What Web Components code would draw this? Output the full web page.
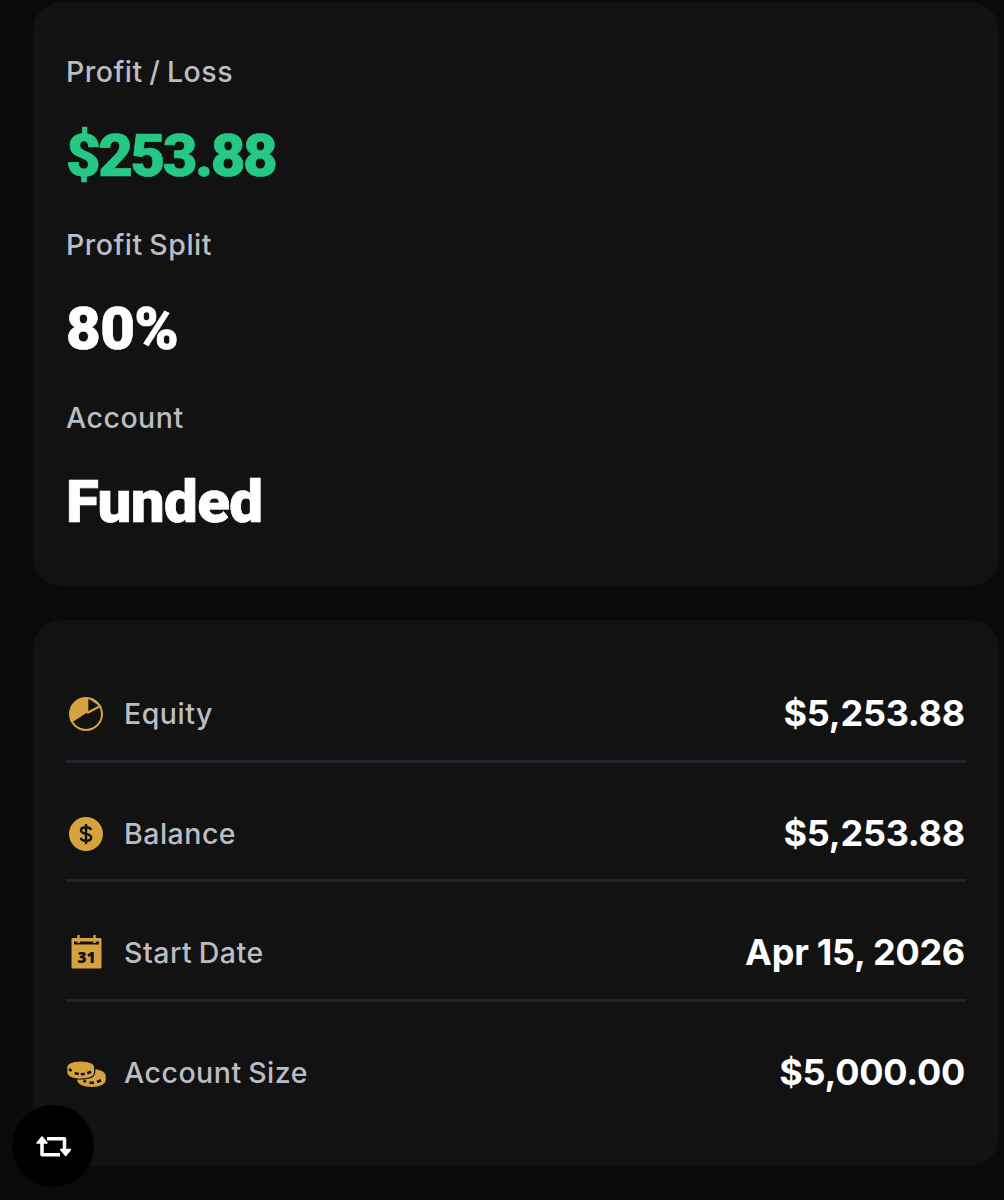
<!DOCTYPE html>
<html>
<head>
<meta charset="utf-8">
<style>
  html, body { margin: 0; background: #0a0a0a; }
  body { font-family: "Inter", "Liberation Sans", sans-serif; height: 1200px; overflow: hidden; }
</style>
</head>
<body>
<stats-page>
  <stat-card>
    <stat-block label="Profit / Loss" value="$253.88" tone="green"></stat-block>
    <stat-block label="Profit Split" value="80%"></stat-block>
    <stat-block label="Account" value="Funded"></stat-block>
  </stat-card>
  <detail-card>
    <detail-row label="Equity" value="$5,253.88">
      <svg slot="icon" viewBox="0 0 36 36" width="36" height="36">
        <circle cx="18" cy="18" r="16" fill="none" stroke="#d4a23f" stroke-width="2"/>
        <path d="M4.300 26.300 L20.300 15.700 V2 A16 16 0 0 0 4.300 26.300 Z" fill="#d4a23f"/>
        <path d="M19 17 L32.500 10" stroke="#d4a23f" stroke-width="2.200" fill="none"/>
        <path d="M20.300 2.500 L31.500 10 L28 5 Z" fill="#d4a23f"/>
      </svg>
    </detail-row>
    <detail-row label="Balance" value="$5,253.88">
      <svg slot="icon" viewBox="0 0 36 36" width="36" height="36">
        <circle cx="18" cy="18" r="17" fill="#d4a23f"/>
        <path d="M23 14 C22.500 12 20.600 11.200 18 11.200 C15.200 11.200 13 12.300 13 14.400 C13 19 23.200 16.800 23.200 21.600 C23.200 23.900 21 24.900 18 24.900 C15.200 24.900 13.200 24 12.800 21.800 M18 8 V28" fill="none" stroke="#121212" stroke-width="2.400"/>
      </svg>
    </detail-row>
    <detail-row label="Start Date" value="Apr 15, 2026">
      <svg slot="icon" viewBox="0 0 36 36" width="36" height="36" style="overflow:visible">
        <path d="M5 3 H32 Q33.500 3 33.500 4.500 V32 Q33.500 33.500 32 33.500 H5 Q3.500 33.500 3.500 32 V4.500 Q3.500 3 5 3 Z" fill="#d4a23f"/>
        <rect x="6" y="6.500" width="25" height="3" fill="#121212"/>
        <path d="M10.500 0 V8 M26.500 0 V8" stroke="#d4a23f" stroke-width="2.400" fill="none"/>
        <text x="18.500" y="27.500" text-anchor="middle" font-family="Open Sans" font-weight="800" font-size="15.500" fill="#121212">31</text>
      </svg>
    </detail-row>
    <detail-row label="Account Size" value="$5,000.00" last>
      <svg slot="icon" viewBox="0 0 40 36" width="40" height="36">
        <path d="M11.300 21 C11.300 17 17 14 25.500 14 C34 14 39.700 17 39.700 21 V25 C39.700 29 34 32 25.500 32 C17 32 11.300 29 11.300 25 Z" fill="#d4a23f"/>
        <path d="M0.700 12.500 C0.700 8.500 6 6 14.700 6 C23.400 6 28.700 8.500 28.700 12.500 V17 C28.700 21.500 23.400 24 14.700 24 C6 24 0.700 21.500 0.700 17 Z" fill="#d4a23f" stroke="#121212" stroke-width="1.200"/>
        <path d="M3 14.200 L5.500 15.800 M8.700 18.200 L12.700 19 M14.800 19.300 L18.800 19 M21.300 18.300 L25 16.800 M17.500 25.600 L20 26.800 M23.500 27.800 L28 27.800 M31 27 L35 25.300" stroke="#121212" stroke-width="2.600" fill="none"/>
      </svg>
    </detail-row>
  </detail-card>
</stats-page>
<swap-button></swap-button>

<script>
customElements.define("stats-page", class extends HTMLElement {
  constructor() {
    super();
    this.attachShadow({ mode: "open" }).innerHTML = `
      <style>
        :host { display: flex; flex-direction: column; gap: 34px; padding: 2px 5px 0 33px; }
      </style>
      <slot></slot>`;
  }
});

customElements.define("stat-card", class extends HTMLElement {
  constructor() {
    super();
    this.attachShadow({ mode: "open" }).innerHTML = `
      <style>
        :host { display: flex; flex-direction: column; gap: 37px; height: 584px; box-sizing: border-box;
          padding: 50px 33px 0; background: #121212; border-radius: 28px; }
      </style>
      <slot></slot>`;
  }
});

customElements.define("stat-block", class extends HTMLElement {
  constructor() {
    super();
    const green = this.getAttribute("tone") === "green";
    this.attachShadow({ mode: "open" }).innerHTML = `
      <style>
        :host { display: flex; flex-direction: column; }
        .label { font: 500 28.500px/40px "Inter", sans-serif; color: #bcbcc4; letter-spacing: 0.500px; word-spacing: -1.500px; }
        .value { font: 900 60px/64px "Roboto", sans-serif; color: ${green ? "#25c985" : "#ffffff"}; margin-top: 32px;
          letter-spacing: ${green ? "-2.500px" : "-0.600px"}; -webkit-text-stroke: 0.700px currentColor; }
      </style>
      <div class="label">${this.getAttribute("label")}</div>
      <div class="value">${this.getAttribute("value")}</div>`;
  }
});

customElements.define("detail-card", class extends HTMLElement {
  constructor() {
    super();
    this.attachShadow({ mode: "open" }).innerHTML = `
      <style>
        :host { display: flex; flex-direction: column; height: 546px; box-sizing: border-box;
          padding: 23px 33px 0; background: #121212; border-radius: 28px; }
      </style>
      <slot></slot>`;
  }
});

customElements.define("detail-row", class extends HTMLElement {
  constructor() {
    super();
    const last = this.hasAttribute("last");
    this.attachShadow({ mode: "open" }).innerHTML = `
      <style>
        :host { display: flex; align-items: center; height: 119.500px; box-sizing: border-box;
          border-bottom: ${last ? "3px solid transparent" : "3px solid #1f2530"}; padding-top: 25.500px; padding-right: 1px; }
        .icon { width: 40px; height: 36px; display: flex; align-items: center; justify-content: center; margin-right: 18px; }
        .label { font: 500 28.500px/40px "Inter", sans-serif; color: #bcbcc4; flex: 1; letter-spacing: 0.500px; word-spacing: -1.500px; }
        .value { font: 700 36px/44px "Inter", sans-serif; color: #ffffff; letter-spacing: -0.250px; margin-top: -2px; }
      </style>
      <div class="icon"><slot name="icon"></slot></div>
      <div class="label">${this.getAttribute("label")}</div>
      <div class="value">${this.getAttribute("value")}</div>`;
  }
});

customElements.define("swap-button", class extends HTMLElement {
  constructor() {
    super();
    this.attachShadow({ mode: "open" }).innerHTML = `
      <style>
        :host { position: fixed; left: 12px; top: 1105px; width: 82px; height: 82px; border-radius: 50%;
          background: #000; display: flex; align-items: center; justify-content: center; }
      </style>
      <svg viewBox="0 0 36 24" width="36" height="24" fill="none" stroke="#fff" stroke-width="3.500" stroke-linejoin="round">
        <path d="M7 8 V20.700 H25"/>
        <path d="M12 4.700 H29.500 V16"/>
        <path d="M2 9 L7 3 L12 9 Z M25.700 15.500 L30.700 21.500 L35.700 15.500 Z" fill="#fff" stroke="#fff" stroke-width="1.500"/>
      </svg>`;
  }
});
</script>
</body>
</html>
